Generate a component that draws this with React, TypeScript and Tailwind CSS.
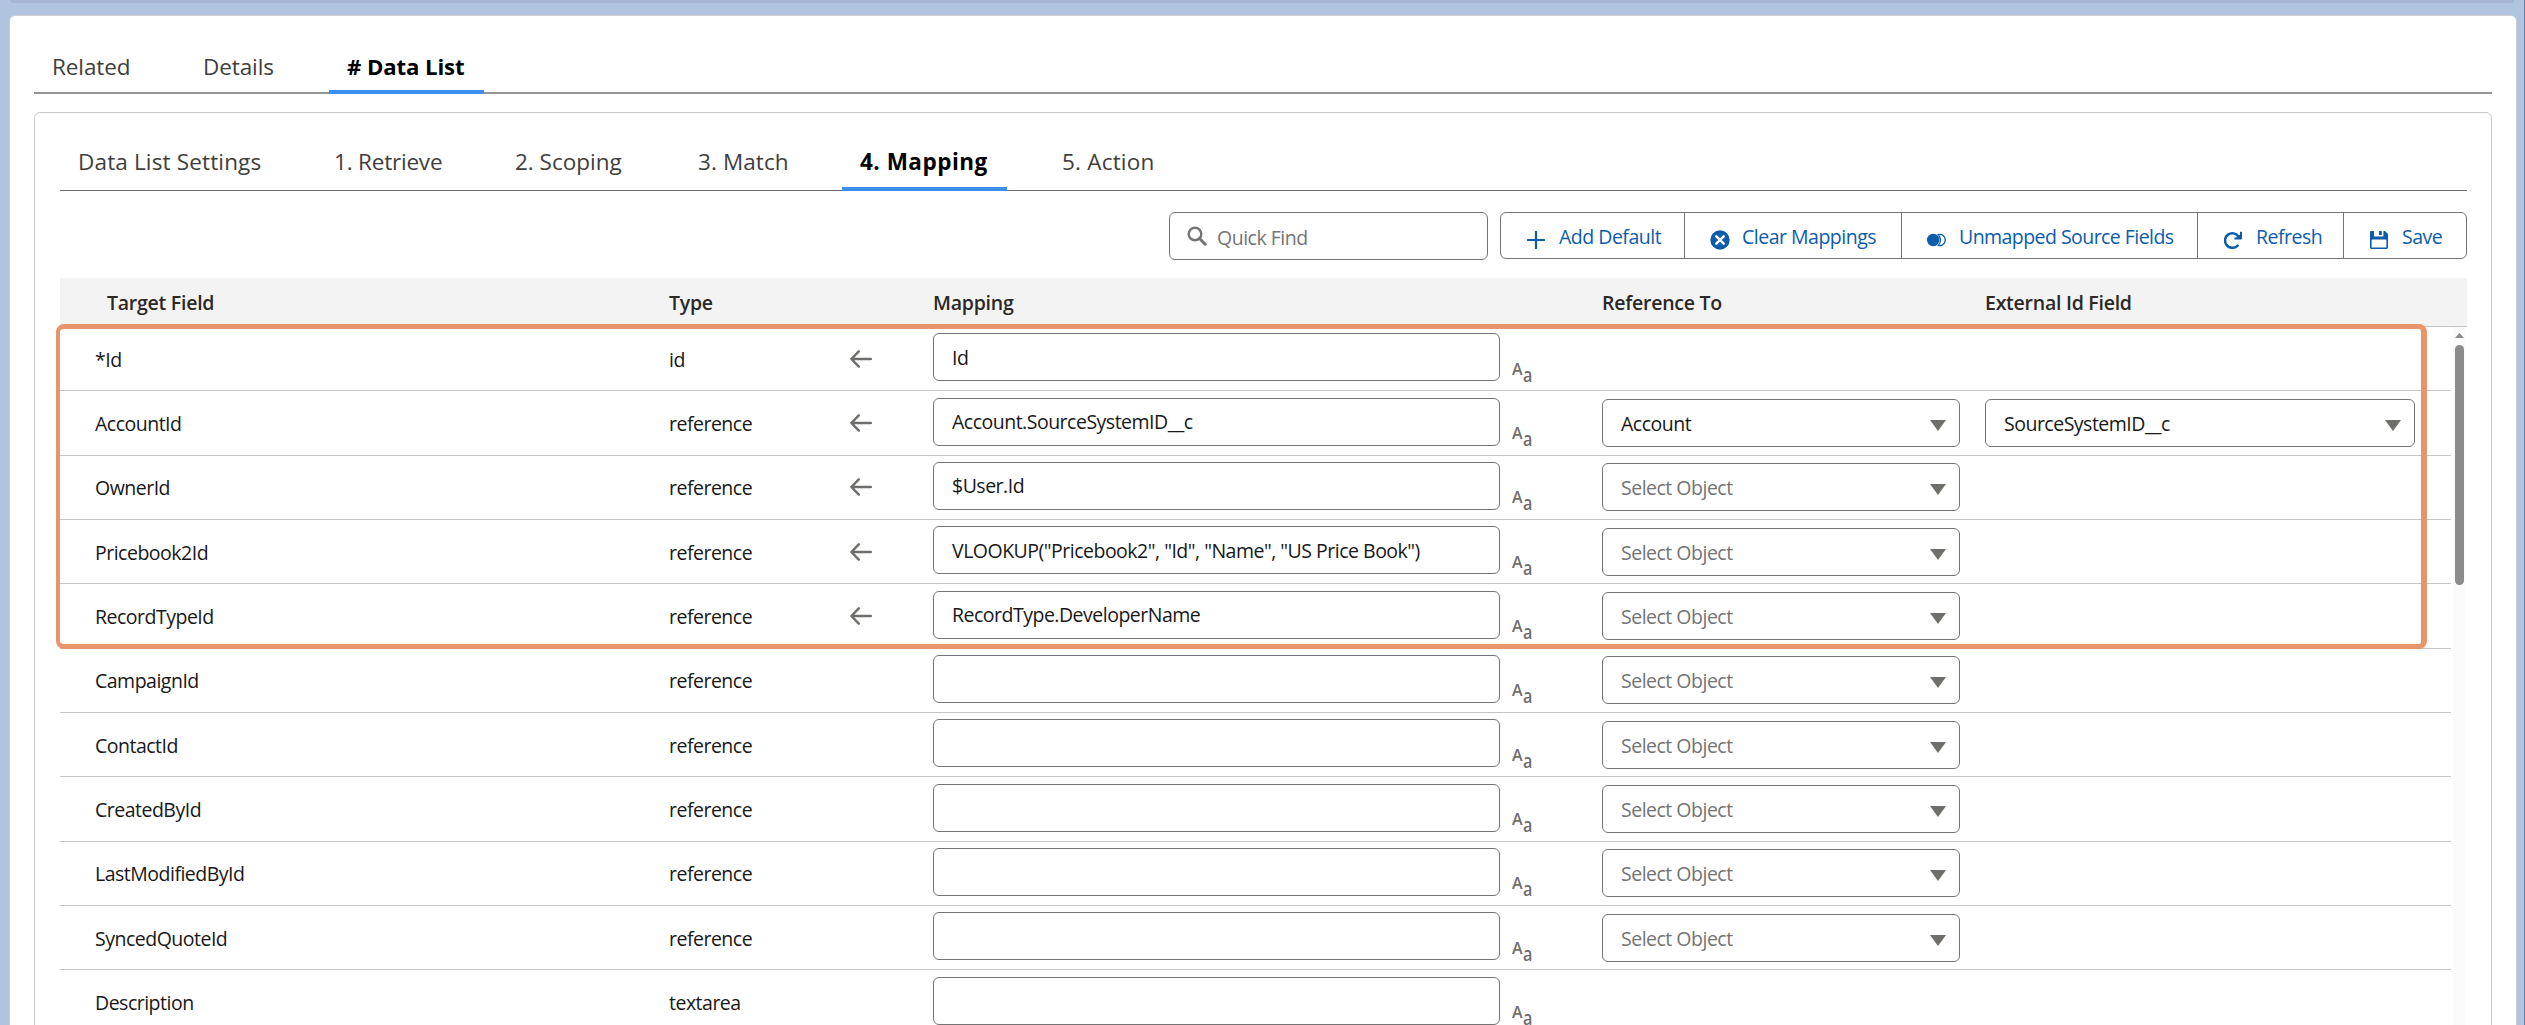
import React from 'react';
import clsx from 'clsx';

interface Tab {
  label: string;
  className: string;
}

interface MappingRow {
  field: string;
  type: string;
  mapping?: string;
  reference?: string;
  externalId?: string;
}

const PAGE_TABS: Tab[] = [
  { label: 'Related', className: 'w-[115px] mr-9' },
  { label: 'Details', className: 'w-[108px] mr-9' },
  { label: '# Data List', className: 'w-[155px] text-[22.2px]' },
];

const STEP_TABS: Tab[] = [
  { label: 'Data List Settings', className: 'w-[218px] mr-[38px] tracking-[0.15px]' },
  { label: '1. Retrieve', className: 'w-[143px] mr-[38px] tracking-[-0.2px]' },
  { label: '2. Scoping', className: 'w-[146px] mr-[37px]' },
  { label: '3. Match', className: 'w-[126px] mr-[36px] tracking-[0.1px]' },
  { label: '4. Mapping', className: 'w-[165px] mr-[37px] tracking-[0.5px]' },
  { label: '5. Action', className: 'w-[127px] tracking-[0.2px]' },
];

const ROWS: MappingRow[] = [
  { field: '*Id', type: 'id', mapping: 'Id' },
  {
    field: 'AccountId',
    type: 'reference',
    mapping: 'Account.SourceSystemID__c',
    reference: 'Account',
    externalId: 'SourceSystemID__c',
  },
  { field: 'OwnerId', type: 'reference', mapping: '$User.Id' },
  {
    field: 'Pricebook2Id',
    type: 'reference',
    mapping: 'VLOOKUP("Pricebook2", "Id", "Name", "US Price Book")',
  },
  {
    field: 'RecordTypeId',
    type: 'reference',
    mapping: 'RecordType.DeveloperName',
  },
  { field: 'CampaignId', type: 'reference' },
  { field: 'ContactId', type: 'reference' },
  { field: 'CreatedById', type: 'reference' },
  { field: 'LastModifiedById', type: 'reference' },
  { field: 'SyncedQuoteId', type: 'reference' },
  { field: 'Description', type: 'textarea' },
];

const GRID =
  'grid grid-cols-[609px_181px_83px_567px_102px_358px_25px_430px] items-center';

const SearchIcon = () => (
  <svg className="h-5 w-5 shrink-0" viewBox="0 0 20 20" fill="none">
    <circle cx="8" cy="8" r="6.3" stroke="#747474" strokeWidth="2.4" />
    <path d="M12.5 12.5 18.2 18.2" stroke="#747474" strokeWidth="3" strokeLinecap="round" />
  </svg>
);

const PlusIcon = () => (
  <svg className="h-[18px] w-[18px]" viewBox="0 0 18 18" fill="none">
    <path d="M9 .8v16.4M.8 9h16.4" stroke="currentColor" strokeWidth="2.2" strokeLinecap="round" />
  </svg>
);

const ClearIcon = () => (
  <svg className="h-5 w-5" viewBox="0 0 20 20" fill="none">
    <circle cx="10" cy="10" r="9.7" fill="currentColor" />
    <path d="m6.3 6.3 7.4 7.4m0-7.4-7.4 7.4" stroke="#fff" strokeWidth="2.6" strokeLinecap="round" />
  </svg>
);

const UnmappedIcon = () => (
  <svg className="h-[14px] w-5" viewBox="0 0 20 14" fill="none">
    <circle cx="6.2" cy="7" r="6.2" fill="currentColor" />
    <path
      d="M11.2 1.6A5.6 5.6 0 1 1 11.2 12.4A7.6 7.6 0 0 0 11.2 1.6Z"
      stroke="currentColor"
      strokeWidth="1.3"
    />
  </svg>
);

const RefreshIcon = () => (
  <svg className="h-[18px] w-[18px]" viewBox="0 0 18 18" fill="none">
    <path
      d="M13.6 14.6A7.3 7.3 0 1 1 14.6 5.8"
      stroke="currentColor"
      strokeWidth="2.5"
      strokeLinecap="round"
    />
    <path d="M17 .8v6.6h-6.6" stroke="currentColor" strokeWidth="2" strokeLinejoin="round" />
    <path d="M17 2.4v5H11.5Z" fill="currentColor" />
  </svg>
);

const SaveIcon = () => (
  <svg className="h-[18px] w-[18px]" viewBox="0 0 18 18">
    <path
      fillRule="evenodd"
      clipRule="evenodd"
      fill="currentColor"
      d="M1 0H4V4.6Q4 5.6 5 5.6H12.4Q13.4 5.6 13.4 4.6V0H15L18 3V16.6Q18 18 16.6 18H1.4Q0 18 0 16.6V1Q0 0 1 0ZM1.6 9.6V16.4H16.4V9.6Q16.4 8.6 15.4 8.6H2.6Q1.6 8.6 1.6 9.6Z"
    />
    <path d="M9 0h2.8v4H9z" fill="currentColor" />
  </svg>
);

const ArrowLeftIcon = () => (
  <svg className="h-[18px] w-[22px]" viewBox="0 0 22 18" fill="none">
    <path
      d="M8.8 1.4 1.4 9l7.4 7.6M1.8 9h19"
      stroke="#706e6b"
      strokeWidth="2.5"
      strokeLinecap="round"
      strokeLinejoin="round"
    />
  </svg>
);

const ACTIONS = [
  { label: 'Add Default', icon: PlusIcon, className: 'w-[184px] pl-[26px]' },
  { label: 'Clear Mappings', icon: ClearIcon, className: 'w-[217px] pl-[25px]' },
  {
    label: 'Unmapped Source Fields',
    icon: UnmappedIcon,
    className: 'w-[296px] pl-[25px] tracking-[-0.55px]',
  },
  { label: 'Refresh', icon: RefreshIcon, className: 'w-[146px] pl-[26px]' },
  { label: 'Save', icon: SaveIcon, className: 'w-[122px] pl-[26px]' },
];

const TabLabel: React.FC<{ tab: Tab; active: boolean; pad: string }> = ({
  tab,
  active,
  pad,
}) => (
  <button
    type="button"
    className={clsx(
      'h-full shrink-0 whitespace-nowrap border-b-4 text-left',
      pad,
      tab.className,
      active
        ? 'border-[#3b8ff3] font-bold text-black'
        : 'border-transparent text-[#3e3e3c]'
    )}
  >
    {tab.label}
  </button>
);

const Select: React.FC<{ value?: string; placeholder?: string }> = ({
  value,
  placeholder,
}) => (
  <div className="flex h-12 items-center justify-between rounded-md border border-[#747474] pl-[18px] pr-[13px]">
    <span className={clsx('pt-px', value ? 'text-[#181818]' : 'text-[#747474]')}>
      {value ?? placeholder}
    </span>
    <svg className="mt-[5px] h-[11px] w-[16px]" viewBox="0 0 16 11">
      <path d="M0 0h16L8 11Z" fill="#706e6b" />
    </svg>
  </div>
);

const Row: React.FC<{ row: MappingRow }> = ({ row }) => (
  <div className={clsx(GRID, 'h-[64.35px] w-[2391px] border-b border-[#c4c4c4]')}>
    <span className="pl-[35px] pt-px">{row.field}</span>
    <span className="pt-px">{row.type}</span>
    <span>{row.mapping && <ArrowLeftIcon />}</span>
    <div className="mb-[3px] flex h-12 items-center rounded-md border border-[#747474] pl-[18px]">
      {row.mapping}
    </div>
    {/* text transform marker */}
    <div className="flex items-start pl-[12px] pt-[27px] font-semibold leading-none tracking-normal text-[#706e6b]">
      <span className="text-[16px]">A</span>
      <span className="origin-left scale-x-85 pt-[5px] text-[19px] leading-[18px]">a</span>
    </div>
    <div>
      {row.type === 'reference' && (
        <Select value={row.reference} placeholder="Select Object" />
      )}
    </div>
    <span />
    <div>{row.externalId && <Select value={row.externalId} />}</div>
  </div>
);

const App: React.FC = () => (
  <div className="h-[1025px] w-[2525px] overflow-hidden border-r border-[#6483a8] bg-[#b0c4df] font-['Open_Sans',sans-serif] text-[19.5px] tracking-[-0.5px] text-[#181818]">
    <div className="mx-[10px] h-[3px] rounded-b-md bg-[#a5b5d3]" />

    <main className="ml-[9px] mt-[12px] h-[1020px] w-[2508px] rounded-md border border-[#c9cdd3] bg-white px-6 pt-[24px]">
      <nav className="flex h-[54px] w-[2458px] border-b-2 border-[#969492] text-[22.5px] tracking-[-0.1px]">
        {PAGE_TABS.map(tab => (
          <div key={tab.label} className="h-[54px]">
            <TabLabel
              tab={tab}
              active={tab.label === '# Data List'}
              pad="pl-[18px] pt-[3px]"
            />
          </div>
        ))}
      </nav>

      <section className="mt-[18px] h-[940px] w-[2458px] rounded-md border border-[#c9c9c9] pl-[25px] pt-[27px]">
        <nav className="flex h-[51px] w-[2407px] border-b border-[#706e6b] text-[22.5px] tracking-normal">
          {STEP_TABS.map(tab => (
            <div key={tab.label} className="h-[51px]">
              <TabLabel
                tab={tab}
                active={tab.label === '4. Mapping'}
                pad="pl-[18px] pb-[3px]"
              />
            </div>
          ))}
        </nav>

        <div className="mt-[21px] flex w-[2407px] justify-end gap-[12px]">
          <div className="flex h-12 w-[319px] items-center gap-[10px] rounded-md border border-[#747474] pl-[17px] text-[#747474]">
            <SearchIcon />
            <span className="pt-[3px]">Quick Find</span>
          </div>
          <div className="flex h-[47px] divide-x divide-[#747474] rounded-md border border-[#747474] text-[#0b5cab]">
            {ACTIONS.map(({ label, icon: Icon, className }) => (
              <button
                key={label}
                type="button"
                className={clsx('flex items-center', className)}
              >
                <span className="flex w-[32px] pt-[8px]">
                  <Icon />
                </span>
                <span className="whitespace-nowrap pt-[3px]">{label}</span>
              </button>
            ))}
          </div>
        </div>

        <div className="relative mt-[18px] w-[2407px]">
          <div
            className={clsx(
              GRID,
              'h-[49px] border-b border-[#c4c4c4] bg-[#f3f3f3] font-semibold tracking-[-0.25px] text-[#2b2826]'
            )}
          >
            <span className="pl-[47px] pt-px">Target Field</span>
            <span className="pt-px">Type</span>
            <span />
            <span className="pt-px">Mapping</span>
            <span />
            <span className="pt-px">Reference To</span>
            <span />
            <span className="pt-px">External Id Field</span>
          </div>

          <div className="flex">
            <div className="w-[2393px]">
              {ROWS.map(row => (
                <Row key={row.field} row={row} />
              ))}
            </div>
            <div className="flex w-[12px] flex-col items-center bg-[#fafafa] pt-[6px]">
              <svg className="h-[5px] w-[9px]" viewBox="0 0 9 5">
                <path d="M0 5h9L4.5 0Z" fill="#8b8b8b" />
              </svg>
              <div className="mt-[7px] h-[240px] w-[9px] rounded-full bg-[#8b8b8b]" />
            </div>
          </div>

          {/* highlighted group of mapped fields */}
          <div className="pointer-events-none absolute -left-1 top-[46px] h-[325px] w-[2371px] rounded-lg border-y-[5px] border-l-4 border-r-[6px] border-[#e9956b]" />
        </div>
      </section>
    </main>
  </div>
);

export default App;
